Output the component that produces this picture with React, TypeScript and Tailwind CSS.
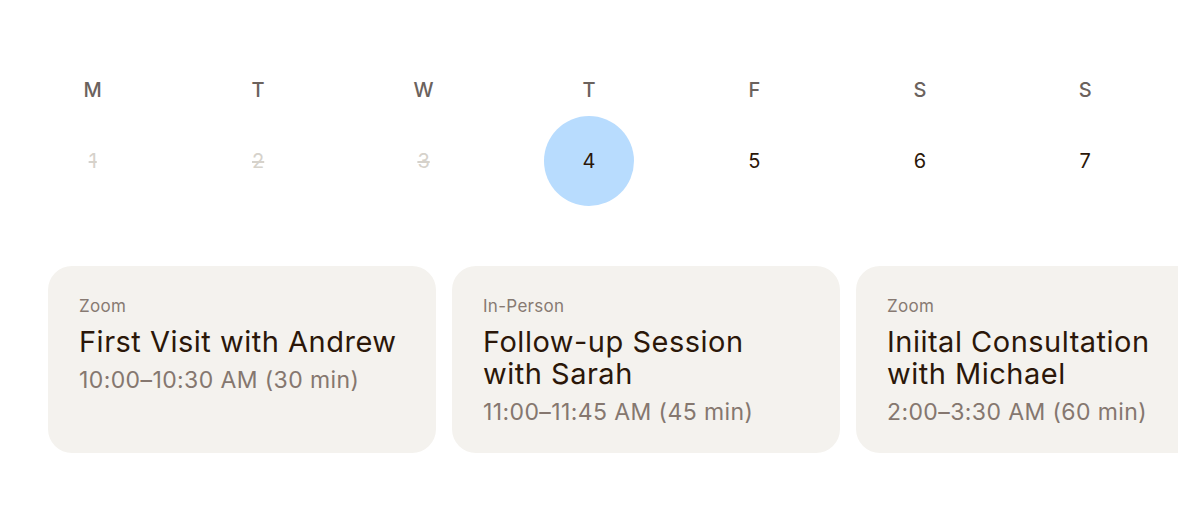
import React from "react";

const days = [
  { l: "M", n: 1, past: true },
  { l: "T", n: 2, past: true },
  { l: "W", n: 3, past: true },
  { l: "T", n: 4, today: true },
  { l: "F", n: 5 },
  { l: "S", n: 6 },
  { l: "S", n: 7 },
];

const cards = [
  { type: "Zoom", title: "First Visit with Andrew", time: "10:00–10:30 AM (30 min)" },
  { type: "In-Person", title: "Follow-up Session with Sarah", time: "11:00–11:45 AM (45 min)" },
  { type: "Zoom", title: "Iniital Consultation with Michael", time: "2:00–3:30 AM (60 min)" },
];

export default function App() {
  return (
    <div
      className="w-[1178px] h-[520px] bg-white overflow-hidden"
      style={{ fontFamily: "Inter, 'Open Sans', sans-serif" }}
    >
      <div className="grid grid-cols-7 px-[10px] pt-[70px]">
        {days.map((d, i) => (
          <div key={i} className="flex flex-col items-center">
            <div className="h-[40px] flex items-center text-[20px] font-medium text-[#6b625d]">
              {d.l}
            </div>
            <div className="mt-[6px] h-[90px] w-[90px] flex items-center justify-center">
              {d.today ? (
                <div className="h-[90px] w-[90px] rounded-full bg-[#b8dcfe] flex items-center justify-center text-[20px] text-[#2b1709]">
                  {d.n}
                </div>
              ) : (
                <span
                  className={
                    d.past
                      ? "text-[20px] text-[#d6d2cb] line-through"
                      : "text-[20px] text-[#2b1709]"
                  }
                >
                  {d.n}
                </span>
              )}
            </div>
          </div>
        ))}
      </div>
      <div className="flex gap-[16px] pl-[48px] mt-[60px]">
        {cards.map((c, i) => (
          <div
            key={i}
            className="w-[388px] h-[187px] shrink-0 rounded-[24px] bg-[#f4f2ee] px-[31px] pt-[29px]"
          >
            <div className="text-[17px] leading-[22px] tracking-[0.3px] text-[#877a72]">{c.type}</div>
            <div className="mt-[9px] text-[29px] leading-[32px] text-[#2b1709] tracking-[0.5px]">
              {c.title}
            </div>
            <div className="mt-[8px] text-[23px] leading-[28px] tracking-[0.4px] text-[#85776f]">
              {c.time}
            </div>
          </div>
        ))}
      </div>
    </div>
  );
}
